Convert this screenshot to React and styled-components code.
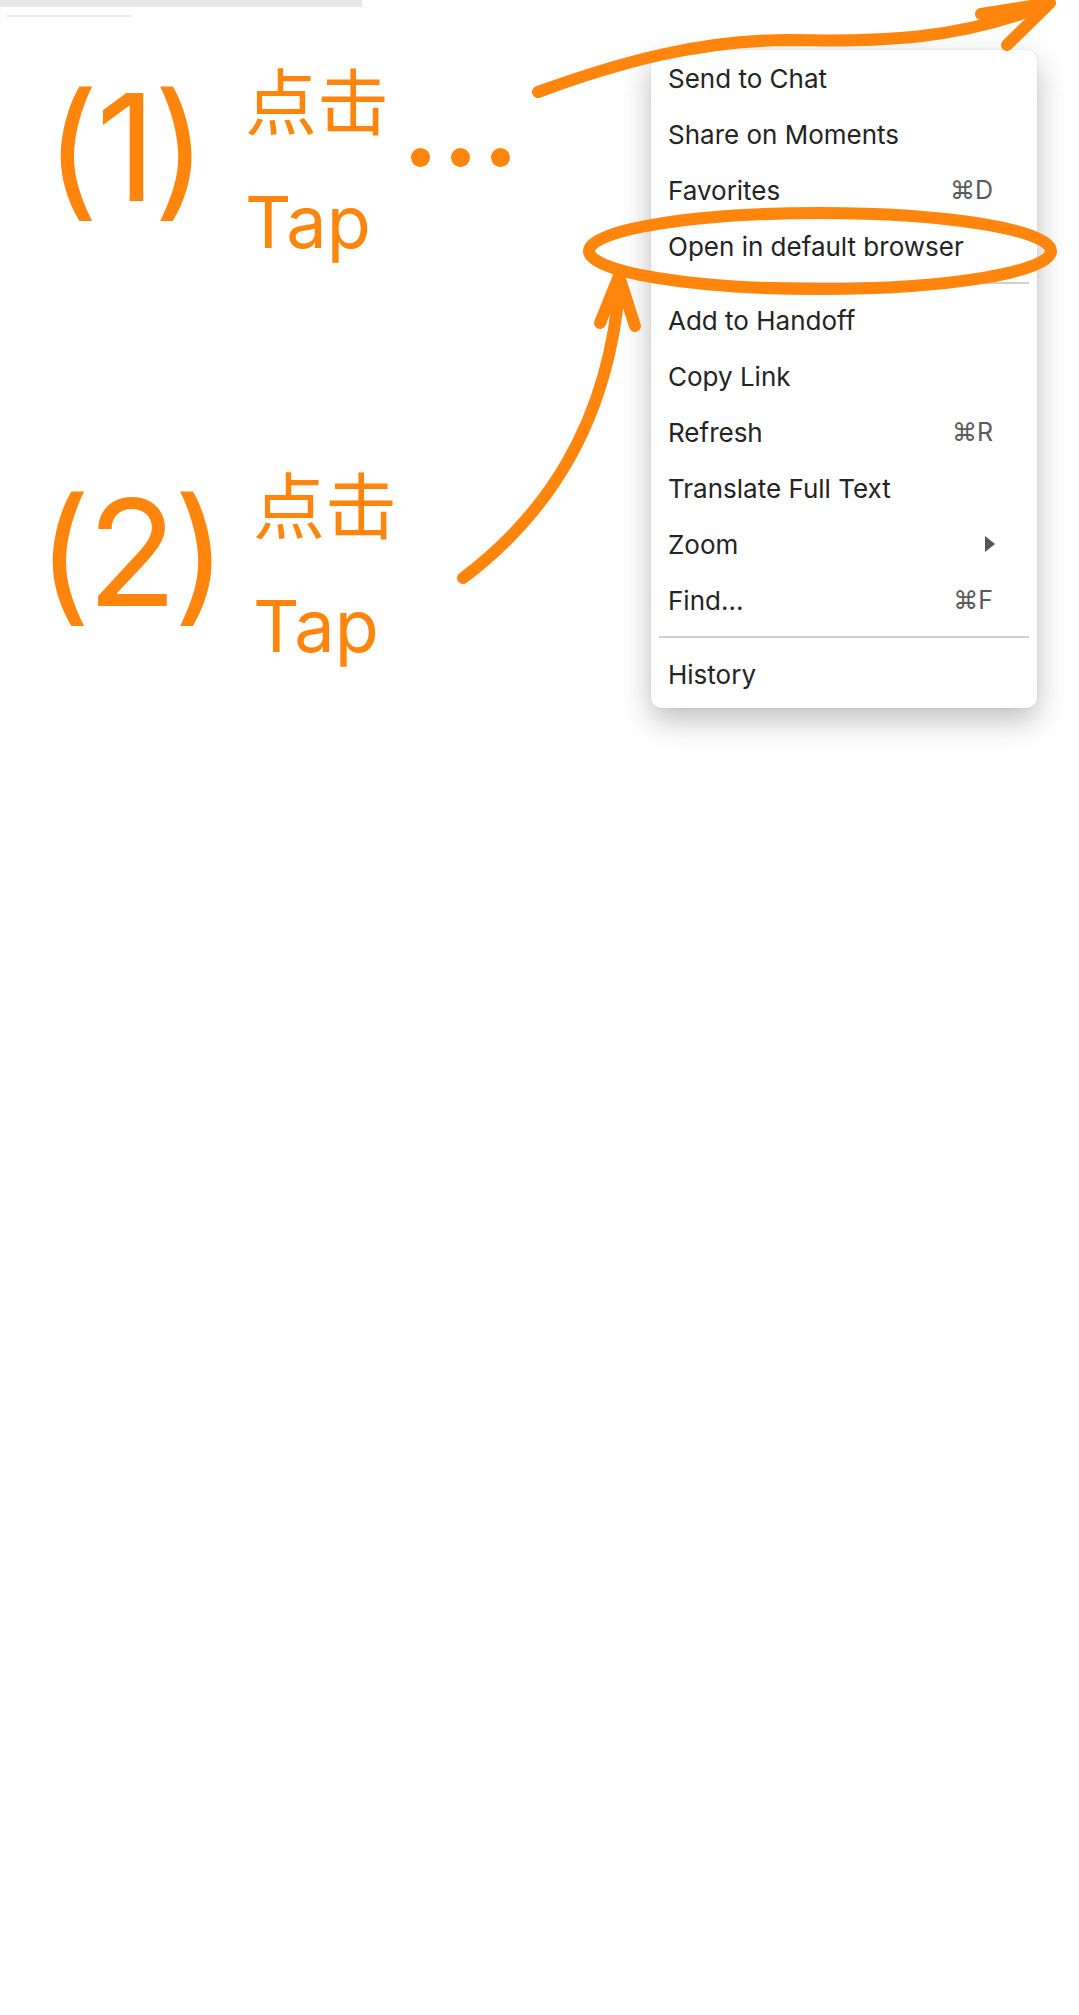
import styled, { createGlobalStyle } from "styled-components";

const ORANGE = "#ff850c";

const GlobalStyle = createGlobalStyle`
  html, body {
    margin: 0;
    padding: 0;
    background: #fff;
  }
  body {
    font-family: Inter, "Noto Sans CJK SC", sans-serif;
  }
`;

const Page = styled.div`
  position: relative;
  width: 1079px;
  height: 2015px;
  background: #fff;
  overflow: hidden;
`;

const ChromeBars = styled.div`
  display: flex;
  flex-direction: column;
  gap: 8px;
`;

const TopBar = styled.div`
  width: 362px;
  height: 7px;
  background: #e7e7e7;
`;

const TabLine = styled.div`
  margin-left: 7px;
  width: 125px;
  height: 2px;
  background: #ebebeb;
`;

const Stage = styled.div`
  display: flex;
  align-items: flex-start;
`;

const Steps = styled.div`
  width: 651px;
  display: flex;
  flex-direction: column;
`;

const Step = styled.div`
  display: flex;
  align-items: flex-start;
  margin-top: ${(p) => p.top}px;
  padding-left: ${(p) => p.left}px;
  color: ${ORANGE};
`;

const Number = styled.div`
  width: ${(p) => p.width}px;
  margin-top: ${(p) => p.drop}px;
  font-family: Inter, sans-serif;
  font-size: 148px;
  font-weight: 400;
  line-height: 148px;
  letter-spacing: ${(p) => p.spacing}px;
  white-space: nowrap;
`;

const Labels = styled.div`
  display: flex;
  flex-direction: column;
  gap: 52px;
`;

const Chinese = styled.div`
  font-family: "Noto Sans CJK SC", sans-serif;
  font-size: 72px;
  line-height: 72px;
`;

const English = styled.div`
  font-family: Inter, sans-serif;
  font-size: 72px;
  line-height: 72px;
`;

const Dots = styled.div`
  display: flex;
  gap: 21px;
  margin: 86px 0 0 22px;
`;

const Dot = styled.span`
  width: 19px;
  height: 19px;
  border-radius: 50%;
  background: ${ORANGE};
`;

const Menu = styled.div`
  width: 386px;
  margin-top: 33px;
  padding-bottom: 6px;
  background: #fff;
  border-radius: 10px;
  box-shadow: 0 12px 30px rgba(0, 0, 0, 0.26), 0 0 2px rgba(0, 0, 0, 0.12);
  font-family: Inter, "DejaVu Sans", sans-serif;
`;

const Item = styled.div`
  height: 56px;
  display: flex;
  align-items: center;
  justify-content: space-between;
  padding: 0 44px 0 17px;
  font-size: 26px;
  color: #242424;
`;

const Shortcut = styled.span`
  color: #5a5a5a;
  font-size: 25px;
`;

const Arrow = styled.span`
  width: 0;
  height: 0;
  margin-right: -2px;
  border-left: 10px solid #555;
  border-top: 8px solid transparent;
  border-bottom: 8px solid transparent;
`;

const Separator = styled.div`
  height: 2px;
  margin: 8px;
  background: #d0d0d0;
`;

const Marks = styled.svg`
  position: absolute;
  top: 0;
  left: 0;
  pointer-events: none;
`;

const items = [
  { label: "Send to Chat" },
  { label: "Share on Moments" },
  { label: "Favorites", key: "⌘D" },
  { label: "Open in default browser" },
  "sep",
  { label: "Add to Handoff" },
  { label: "Copy Link" },
  { label: "Refresh", key: "⌘R" },
  { label: "Translate Full Text" },
  { label: "Zoom", sub: true },
  { label: "Find...", key: "⌘F" },
  "sep",
  { label: "History" },
];

export default function App() {
  return (
    <Page>
      <GlobalStyle />
      <ChromeBars>
        <TopBar />
        <TabLine />
      </ChromeBars>
      <Stage>
        <Steps>
          <Step top={45} left={45}>
            <Number width={200} drop={12} spacing={-3}>(1)</Number>
            <Labels>
              <Chinese>点击</Chinese>
              <English>Tap</English>
            </Labels>
            <Dots>
              <Dot />
              <Dot />
              <Dot />
            </Dots>
          </Step>
          <Step top={208} left={37}>
            <Number width={216} drop={13} spacing={-4}>(2)</Number>
            <Labels>
              <Chinese>点击</Chinese>
              <English>Tap</English>
            </Labels>
          </Step>
        </Steps>
        <Menu>
          {items.map((it, i) =>
            it === "sep" ? (
              <Separator key={i} />
            ) : (
              <Item key={i}>
                <span>{it.label}</span>
                {it.key && <Shortcut>{it.key}</Shortcut>}
                {it.sub && <Arrow />}
              </Item>
            )
          )}
        </Menu>
      </Stage>
      <Marks width="1079" height="800" viewBox="0 0 1079 800">
        <g fill="none" stroke={ORANGE} strokeWidth="12" strokeLinecap="round" strokeLinejoin="round">
          <path d="M 538 92 C 620 62, 700 40, 790 40 C 880 42, 960 40, 1048 4" />
          <path d="M 981 14 L 1050 3 L 1007 45" />
          <ellipse cx="820" cy="251" rx="231" ry="38" />
          <path d="M 463 578 C 540 520, 610 430, 620 278" />
          <path d="M 600 323 L 619 276 L 635 326" />
        </g>
      </Marks>
    </Page>
  );
}
